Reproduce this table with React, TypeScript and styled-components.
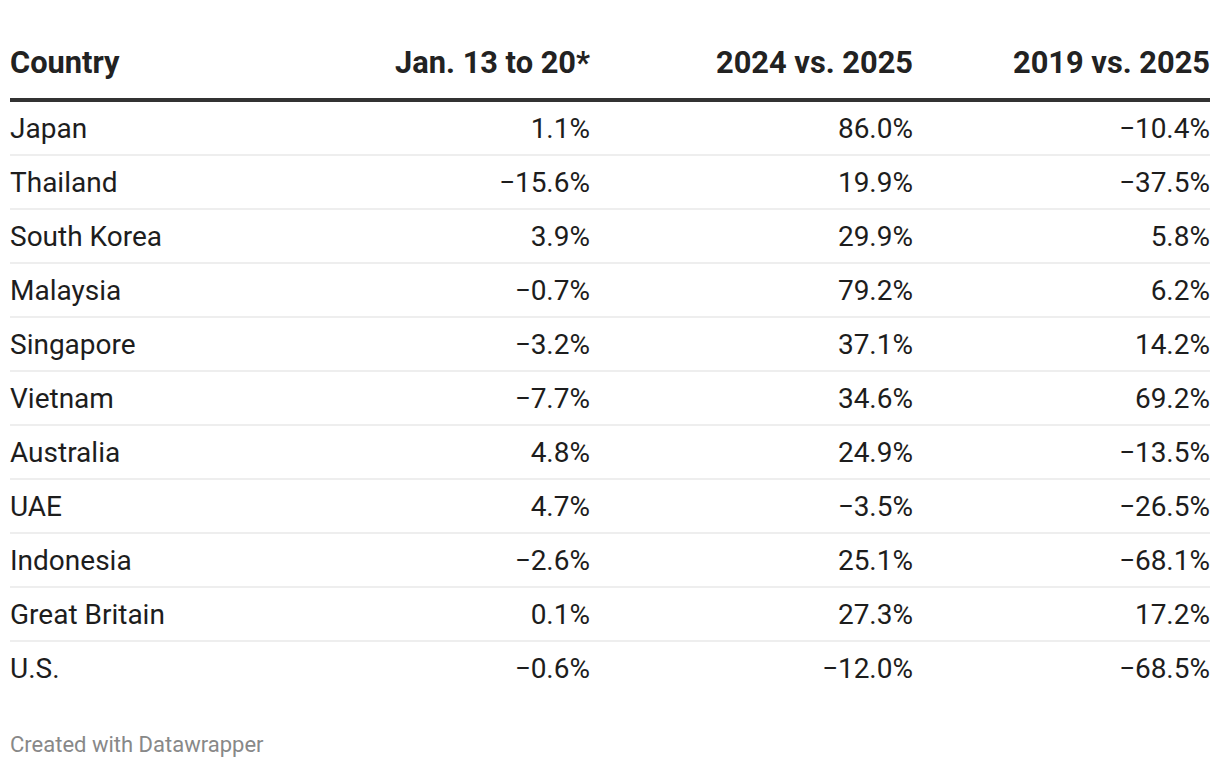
import React from "react";
import styled, { createGlobalStyle } from "styled-components";

const Global = createGlobalStyle`
  html, body { margin: 0; padding: 0; background: #fff; }
  body { font-family: Roboto, "Liberation Sans", sans-serif; }
`;

const Page = styled.div`
  padding: 0 10px;
  width: 1200px;
`;

const Grid = styled.div<{ $head?: boolean; $last?: boolean }>`
  display: grid;
  grid-template-columns: 290px 290px 323px 297px;
  border-bottom: ${(p) => (p.$head ? "4px solid #333" : p.$last ? "none" : "2px solid #eee")};
  padding: ${(p) => (p.$head ? "45px 0 17px" : "2px 0 0")};
  height: ${(p) => (p.$head ? "36px" : "50px")};
`;

const Cell = styled.div<{ $head?: boolean; $num?: boolean }>`
  font-size: ${(p) => (p.$head ? "30.8px" : "28px")};
  font-weight: ${(p) => (p.$head ? 700 : 400)};
  line-height: ${(p) => (p.$head ? "36px" : "50px")};
  color: ${(p) => (p.$head ? "#222" : "#1d1d1d")};
  text-align: ${(p) => (p.$num ? "right" : "left")};
  white-space: nowrap;
`;

const Footer = styled.div`
  margin-top: 38px;
  font-size: 22px;
  line-height: 26px;
  color: #888;
`;

const rows: [string, string, string, string][] = [
  ["Japan", "1.1%", "86.0%", "−10.4%"],
  ["Thailand", "−15.6%", "19.9%", "−37.5%"],
  ["South Korea", "3.9%", "29.9%", "5.8%"],
  ["Malaysia", "−0.7%", "79.2%", "6.2%"],
  ["Singapore", "−3.2%", "37.1%", "14.2%"],
  ["Vietnam", "−7.7%", "34.6%", "69.2%"],
  ["Australia", "4.8%", "24.9%", "−13.5%"],
  ["UAE", "4.7%", "−3.5%", "−26.5%"],
  ["Indonesia", "−2.6%", "25.1%", "−68.1%"],
  ["Great Britain", "0.1%", "27.3%", "17.2%"],
  ["U.S.", "−0.6%", "−12.0%", "−68.5%"],
];

export default function App() {
  return (
    <Page>
      <Global />
      <Grid $head>
        <Cell $head>Country</Cell>
        <Cell $head $num>Jan. 13 to 20*</Cell>
        <Cell $head $num>2024 vs. 2025</Cell>
        <Cell $head $num>2019 vs. 2025</Cell>
      </Grid>
      {rows.map((r, i) => (
        <Grid key={r[0]} $last={i === rows.length - 1}>
          <Cell>{r[0]}</Cell>
          <Cell $num>{r[1]}</Cell>
          <Cell $num>{r[2]}</Cell>
          <Cell $num>{r[3]}</Cell>
        </Grid>
      ))}
      <Footer>Created with Datawrapper</Footer>
    </Page>
  );
}
